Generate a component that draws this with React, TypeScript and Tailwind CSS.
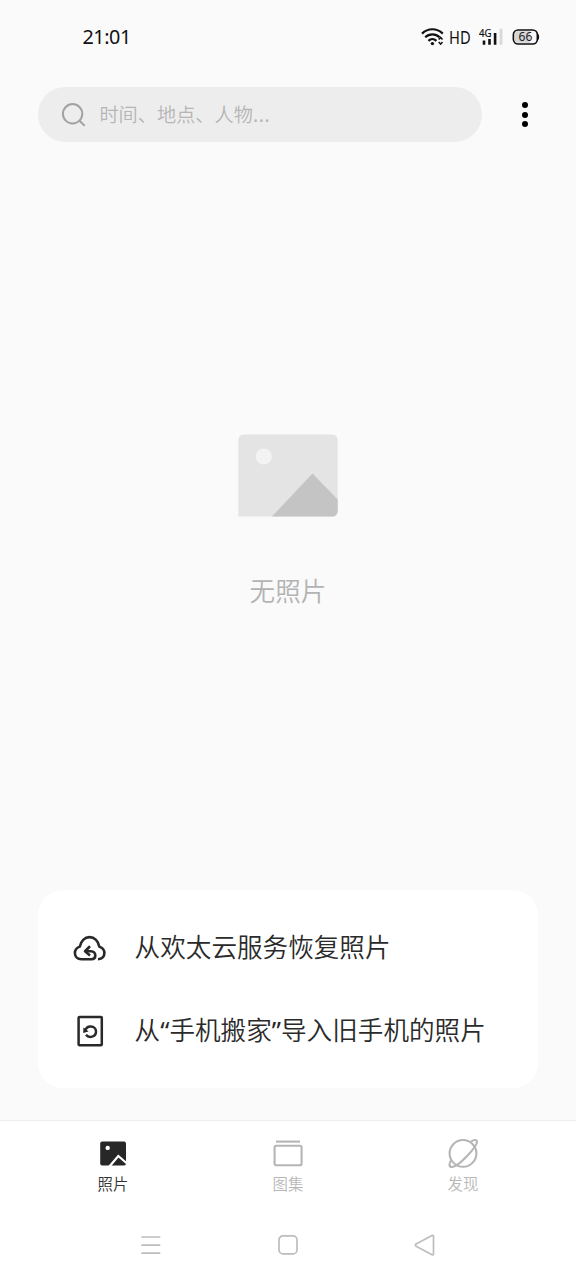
import type { ReactNode } from "react";

function StatusBar() {
  return (
    <div className="flex h-[74px] items-center justify-between pl-[82.5px] pr-9">
      <span className="text-[19.8px] font-normal leading-6 tracking-[-0.45px] text-[#111]">21:01</span>
      <div className="flex items-center font-normal">
        <svg width="24" height="20" viewBox="0 0 24 20" fill="none" stroke="#111" strokeWidth="2.2">
          <path d="M1 6.6C7 0.8 15.8 0.8 21.8 6.6" />
          <path d="M4.2 10.3C8.3 6.3 14.5 6.3 18.6 10.3" />
          <path d="M7.4 13.9C9.8 11.5 13 11.5 15.4 13.9" />
          <circle cx="11.4" cy="16.6" r="1.7" fill="#111" stroke="none" />
          <path d="M17.7 12.6L19.6 10.4L21.5 12.6M17.7 15L19.6 17.2L21.5 15" strokeWidth="1.5" />
        </svg>
        <span className="ml-1 w-6 text-[17.5px] leading-6 text-[#111]">
          <span className="inline-block origin-left scale-x-[0.84]">HD</span>
        </span>
        <svg className="ml-[6px]" width="26" height="20" viewBox="0 0 26 20">
          <text x="0" y="9.9" fontSize="10.5" textLength="12.5" lengthAdjust="spacingAndGlyphs" fill="#111" stroke="#111" strokeWidth="0.2">4G</text>
          <path d="M5 13.6V17.8M10.5 12V17.8M16.1 6V17.8" stroke="#111" strokeWidth="2.6" />
          <path d="M22 1.8V17.8" stroke="#d8d8d8" strokeWidth="2.8" />
        </svg>
        <svg className="ml-[7px]" width="28" height="18" viewBox="0 0 28 18">
          <rect x="1.4" y="2" width="24" height="14" rx="4.8" fill="#fafafa" stroke="#111" strokeWidth="1.7" />
          <path d="M6 3.2H18V14.8H6Q2.8 14.8 2.8 11.5V6.5Q2.8 3.2 6 3.2Z" fill="#d5d5d5" />
          <path d="M26 6.5Q27.4 9 26 11.5Z" fill="#111" stroke="#111" />
          <text x="13.4" y="13.3" fontSize="12" textAnchor="middle" fill="#222">66</text>
        </svg>
      </div>
    </div>
  );
}

function SearchHeader() {
  return (
    <div className="mt-[13px] flex h-[55px] items-center pl-[38px]">
      <div className="flex h-[55px] w-[444px] items-center rounded-full bg-[#ededed] pl-[23.4px]">
        <svg width="26" height="26" viewBox="0 0 26 26" fill="none" stroke="#a2a2a2" strokeWidth="2">
          <circle cx="11.6" cy="11.8" r="9.7" />
          <path d="M18.3 18.5L23.7 23.9" />
        </svg>
        <span className="ml-3 text-[19.2px] leading-6 text-[#b5b5b5]">时间、地点、人物<span className="font-normal tracking-[0.6px]">...</span></span>
      </div>
      <div className="ml-[39.8px] flex flex-col gap-[3.8px]">
        <i className="size-[6px] rounded-full bg-black" />
        <i className="size-[6px] rounded-full bg-black" />
        <i className="size-[6px] rounded-full bg-black" />
      </div>
    </div>
  );
}

function EmptyState() {
  return (
    <div className="mt-[292px] flex flex-col items-center">
      <svg width="100" height="83" viewBox="0 -0.5 100 83">
        <path d="M6 0H94Q99.7 0 99.7 6V76Q99.7 82 94 82H0.3V6Q0.3 0 6 0Z" fill="#e4e4e4" />
        <circle cx="25.8" cy="22" r="8.1" fill="#f3f3f3" />
        <path d="M34 82L74.5 39L99.7 65V76Q99.7 82 94 82Z" fill="#c4c4c4" />
      </svg>
      <p className="mt-[57px] text-[25.6px] leading-9 text-[#b3b3b3]">无照片</p>
    </div>
  );
}

function CardRow({ icon, label }: { icon: ReactNode; label: ReactNode }) {
  return (
    <div className="flex h-[83px] items-center pl-[34px]">
      {icon}
      <span className="ml-[26.6px] whitespace-nowrap text-[25.6px] leading-9 text-[#2a2a2a]">{label}</span>
    </div>
  );
}

function RestoreCard() {
  return (
    <div className="mx-[38px] mt-[280px] flex h-[198px] flex-col rounded-[25px] bg-white pt-4">
      <CardRow
        label="从欢太云服务恢复照片"
        icon={
          <svg width="36" height="30" viewBox="0 0 36 30" fill="none" stroke="#292929" strokeWidth="2.6" strokeLinejoin="round">
            <path d="M26 26.2C30 25.8 32.4 23.3 32.4 20C32.4 16.8 30 14.6 27.3 13.6C26.5 8.2 22.5 4.1 17.6 4.1C12.7 4.1 8.7 8.2 7.8 13.6C5 14.6 2.9 16.9 2.9 20C2.9 23.6 5.7 26.2 9.3 26.2H19.5C22 26.2 23.3 24.6 23.3 22.5C23.3 20 21.5 18.2 19 18.2H14" />
            <path d="M18 13.3L13 18.2L18 22.5" />
          </svg>
        }
      />
      <CardRow
        label={<>从<span className="font-normal">“</span>手机搬家<span className="font-normal">”</span>导入旧手机的照片</>}
        icon={
          <svg width="36" height="34" viewBox="0 0 36 34" fill="none" stroke="#292929" strokeWidth="2.5">
            <rect x="6.6" y="3" width="23.2" height="28.2" rx="1" />
            <path d="M13.2 17.2C14.2 10.6 24 11.2 24 17.4C24 23.2 16.8 24.4 14 20.8" />
            <path d="M11.2 19L11.4 13.6L16.6 17.6Z" fill="#292929" stroke="none" />
          </svg>
        }
      />
    </div>
  );
}

function Tab({ icon, label, active = false }: { icon: ReactNode; label: string; active?: boolean }) {
  return (
    <div className={active ? "flex w-[175px] flex-col items-center text-[#333]" : "flex w-[175px] flex-col items-center text-[#b8b8b8]"}>
      {icon}
      <span className="mt-1 text-[15.4px] leading-6">{label}</span>
    </div>
  );
}

function TabBar() {
  return (
    <div className="mt-8 flex h-[98px] justify-center border-t border-[#eeeeee] bg-white pt-4">
      <Tab
        active
        label="照片"
        icon={
          <svg width="32" height="32" viewBox="0 0 32 32">
            <rect x="3.2" y="4.6" width="25.8" height="24" rx="2" fill="#272727" />
            <circle cx="10.7" cy="10.9" r="2.2" fill="white" />
            <path d="M12 30L21.3 19L30 26.5" fill="none" stroke="white" strokeWidth="2.2" />
          </svg>
        }
      />
      <Tab
        label="图集"
        icon={
          <svg width="32" height="32" viewBox="0 0 32 32" fill="none" stroke="#b5b5b5" strokeWidth="2.1">
            <path d="M4 4.6H28" />
            <rect x="2.6" y="8.7" width="27" height="19.6" rx="1.5" />
          </svg>
        }
      />
      <Tab
        label="发现"
        icon={
          <svg width="32" height="32" viewBox="0 0 32 32" fill="none" stroke="#b5b5b5" strokeWidth="2.1">
            <circle cx="16" cy="16.4" r="13.4" />
            <path d="M24 4.6C27 2.4 29.8 2.5 30 4.6C30.3 9.3 11.5 29.7 5.2 30C1.6 30.2 1.7 26.5 4.4 23.2" />
          </svg>
        }
      />
    </div>
  );
}

function SystemNav() {
  return (
    <div className="flex flex-1 items-center justify-center gap-[113px] bg-white pb-[8px]">
      <svg width="24" height="24" viewBox="0 0 24 24" stroke="#bdbdbd" strokeWidth="1.7">
        <path d="M2.3 4H21.3M2.3 12.2H21.3M2.3 20.2H21.3" />
      </svg>
      <svg width="24" height="24" viewBox="0 0 24 24" fill="none" stroke="#bdbdbd" strokeWidth="1.7">
        <rect x="3" y="2.9" width="18" height="18" rx="4" />
      </svg>
      <svg width="24" height="24" viewBox="0 0 24 24" fill="none" stroke="#bdbdbd" strokeWidth="1.7" strokeLinejoin="round">
        <path d="M3.1 11L19 2.4Q20.5 1.8 20.5 3.4V20.8Q20.5 22.4 19 21.7L3.1 13.2Q1.6 12.1 3.1 11Z" />
      </svg>
    </div>
  );
}

export default function App() {
  return (
    <main className="flex h-[1280px] w-[576px] flex-col overflow-hidden bg-[#fafafa] font-['Noto_Sans','Noto_Sans_CJK_SC',sans-serif] font-[350]">
      <StatusBar />
      <SearchHeader />
      <EmptyState />
      <RestoreCard />
      <TabBar />
      <SystemNav />
    </main>
  );
}
